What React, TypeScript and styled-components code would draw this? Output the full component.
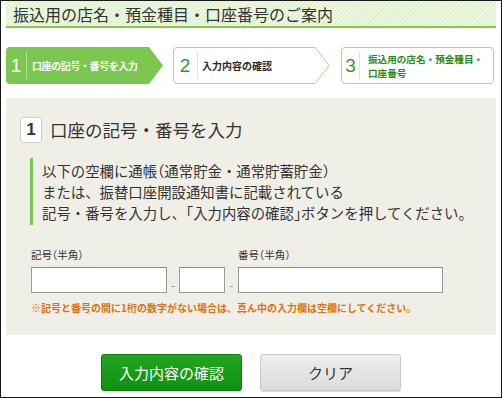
import React from "react";
import styled, { createGlobalStyle } from "styled-components";

const GlobalStyle = createGlobalStyle`
  html, body {
    margin: 0;
    padding: 0;
    background: #fff;
  }
  body {
    font-family: "Noto Sans CJK JP", "Noto Sans", sans-serif;
    color: #333;
  }
  * {
    box-sizing: border-box;
  }
`;

type StepKind = "active" | "next" | "last";

interface StepProps {
  kind: StepKind;
  num: number;
  width: number;
  numWidth: number;
  gap: number;
  children: React.ReactNode;
}

const ArrowShape: React.FC<{ kind: StepKind; width: number }> = ({
  kind,
  width,
}) => {
  const h = 37;
  const w = width;
  if (kind === "active") {
    return (
      <ShapeSvg width={w} height={h} viewBox={`0 0 ${w} ${h}`}>
        <path
          d={`M4 0 H${w - 14} L${w} ${h / 2} L${w - 14} ${h} H4 Q0 ${h} 0 ${h - 4} V4 Q0 0 4 0 Z`}
          fill="#7bc750"
        />
      </ShapeSvg>
    );
  }
  if (kind === "next") {
    return (
      <ShapeSvg width={w} height={h} viewBox={`0 0 ${w} ${h}`}>
        <path
          d={`M4 0.5 H${w - 15} L${w - 0.8} ${h / 2} L${w - 15} ${h - 0.5} H4 Q0.5 ${h - 0.5} 0.5 ${h - 4} V4 Q0.5 0.5 4 0.5 Z`}
          fill="#fff"
          stroke="#a9d98c"
          strokeWidth="1"
        />
      </ShapeSvg>
    );
  }
  return null;
};

const Step: React.FC<StepProps> = ({
  kind,
  num,
  width,
  numWidth,
  gap,
  children,
}) => (
  <StepBox kind={kind} style={{ width }}>
    <ArrowShape kind={kind} width={width} />
    <StepNum kind={kind} style={{ width: numWidth }}>
      {num}
    </StepNum>
    <StepSep kind={kind} />
    <StepLabel kind={kind} style={{ marginLeft: gap }}>
      {children}
    </StepLabel>
  </StepBox>
);

const App: React.FC = () => {
  return (
    <>
      <GlobalStyle />
      <Frame>
        <Header>
          <h1>振込用の店名・預金種目・口座番号のご案内</h1>
        </Header>

        <Steps>
          <Step kind="active" num={1} width={157} numWidth={20} gap={5}>
            口座の記号・番号を入力
          </Step>
          <Step kind="next" num={2} width={157} numWidth={24} gap={4}>
            入力内容の確認
          </Step>
          <Step kind="last" num={3} width={153} numWidth={17} gap={8}>
            <StepLine>振込用の店名・預金種目・</StepLine>
            <StepLine>口座番号</StepLine>
          </Step>
        </Steps>

        <Panel>
          <Heading>
            <HeadingNum>1</HeadingNum>
            <h2>口座の記号・番号を入力</h2>
          </Heading>

          <Description>
            以下の空欄に通帳<Half>（</Half>通常貯金・通常貯蓄貯金<Half>）</Half>
            <br />
            または、振替口座開設通知書に記載されている
            <br />
            記号・番号を入力し、<Half>「</Half>入力内容の確認<Half>」</Half>
            ボタンを押してください。
          </Description>

          <FieldGrid>
            <FieldLabel col={1}>
              記号<Half>（</Half>半角<Half>）</Half>
            </FieldLabel>
            <FieldLabel col={5}>
              番号<Half>（</Half>半角<Half>）</Half>
            </FieldLabel>
            <TextInput col={1} aria-label="記号1" />
            <Dash col={2}>-</Dash>
            <TextInput col={3} aria-label="記号2" />
            <Dash col={4}>-</Dash>
            <TextInput col={5} aria-label="番号" />
          </FieldGrid>

          <Warning>
            ※記号と番号の間に1桁の数字がない場合は、真ん中の入力欄は空欄にしてください。
          </Warning>
        </Panel>

        <Buttons>
          <Button variant="primary">入力内容の確認</Button>
          <Button variant="secondary">クリア</Button>
        </Buttons>
      </Frame>
    </>
  );
};

export default App;

const Frame = styled.div`
  width: 502px;
  height: 398px;
  border: 1px solid #1a1a1a;
  padding: 0 5px;
  overflow: hidden;
`;

const Header = styled.div`
  height: 27px;
  border-bottom: 2px solid #86c94f;
  background-color: #e3f2cf;
  background-image: repeating-linear-gradient(
    135deg,
    #eef8e2 0px,
    #eef8e2 1.5px,
    #e1f0cc 1.5px,
    #e1f0cc 3px
  );
  padding-left: 7px;
  display: flex;
  align-items: center;

  h1 {
    margin: 0;
    font-size: 16px;
    font-weight: 400;
    line-height: 20px;
    color: #333;
  }
`;

const Half = styled.span`
  font-feature-settings: "halt";
`;

const Steps = styled.div`
  display: flex;
  margin-top: 19px;
  gap: 10px;

  & > :last-child {
    margin-left: 1px;
  }
`;

const StepBox = styled.div<{ kind: StepKind }>`
  position: relative;
  height: 37px;
  display: flex;
  align-items: center;
  border: ${(p) => (p.kind === "last" ? "1px solid #a9d98c" : "none")};
  border-radius: ${(p) => (p.kind === "last" ? "4px" : "0")};
  background: ${(p) => (p.kind === "last" ? "#fff" : "transparent")};
`;

const ShapeSvg = styled.svg`
  position: absolute;
  left: 0;
  top: 0;
  z-index: 0;
`;

const StepNum = styled.span<{ kind: StepKind }>`
  position: relative;
  font-family: "Liberation Sans", Arial, sans-serif;
  font-size: 19px;
  line-height: 22px;
  text-align: center;
  color: ${(p) => (p.kind === "active" ? "#fff" : "#2f9a2a")};
  flex: none;
`;

const StepSep = styled.span<{ kind: StepKind }>`
  position: relative;
  width: 1px;
  height: 27px;
  flex: none;
  background: ${(p) =>
    p.kind === "active" ? "rgba(255, 255, 255, 0.45)" : "#d9e8cf"};
`;

const StepLabel = styled.span<{ kind: StepKind }>`
  position: relative;
  display: flex;
  flex-direction: column;
  font-size: ${(p) => (p.kind === "last" ? "9.6px" : "10px")};
  font-weight: 700;
  line-height: 14px;
  white-space: nowrap;
  letter-spacing: ${(p) => (p.kind === "active" ? "-0.4px" : "0")};
  color: ${(p) =>
    p.kind === "active" ? "#fff" : p.kind === "next" ? "#2a2a2a" : "#2a8a20"};
`;

const StepLine = styled.span`
  display: block;
  height: 14px;
`;

const Panel = styled.div`
  margin-top: 14px;
  background: #efefe8;
  padding: 19px 14px 20px;
`;

const Heading = styled.div`
  display: flex;
  align-items: center;
  gap: 8px;

  h2 {
    margin: 0;
    font-size: 17.5px;
    font-weight: 400;
    line-height: 24px;
    color: #333;
  }
`;

const HeadingNum = styled.span`
  width: 22px;
  height: 26px;
  background: #fff;
  border: 1px solid #d0d0c8;
  border-radius: 3px;
  display: flex;
  align-items: center;
  justify-content: center;
  font-family: "Liberation Sans", Arial, sans-serif;
  font-weight: 700;
  font-size: 17px;
  color: #333;
`;

const Description = styled.p`
  margin: 15px 0 0 10px;
  border-left: 3px solid #7bc750;
  padding: 2px 0 2px 9px;
  font-size: 14.4px;
  line-height: 21px;
  color: #333;
  white-space: nowrap;
`;

const FieldGrid = styled.div`
  display: grid;
  grid-template-columns: 136px 12px 46px 13px 205px;
  grid-template-rows: 14px 26px;
  row-gap: 5px;
  margin: 23px 0 0 11px;
`;

const FieldLabel = styled.label<{ col: number }>`
  grid-row: 1;
  grid-column: ${(p) => p.col};
  font-size: 10.5px;
  line-height: 14px;
  color: #333;
  white-space: nowrap;
`;

const TextInput = styled.input<{ col: number }>`
  grid-row: 2;
  grid-column: ${(p) => p.col};
  width: 100%;
  height: 26px;
  margin: 0;
  border: 1px solid #9a9a9a;
  border-top-color: #8a8a8a;
  background: #fff;
  padding: 0 4px;
  font-size: 13px;
`;

const Dash = styled.span<{ col: number }>`
  grid-row: 2;
  grid-column: ${(p) => p.col};
  align-self: end;
  text-align: center;
  font-family: "Liberation Sans", Arial, sans-serif;
  font-size: 11px;
  line-height: 16px;
  color: #888;
`;

const Warning = styled.p`
  margin: 8px 0 0 11px;
  font-size: 10px;
  font-weight: 700;
  line-height: 14px;
  color: #e2700e;
  white-space: nowrap;
`;

const Buttons = styled.div`
  display: flex;
  justify-content: center;
  gap: 18px;
  margin-top: 19px;
`;

const Button = styled.button<{ variant: "primary" | "secondary" }>`
  width: 141px;
  height: 37px;
  border-radius: 3px;
  font-family: "Noto Sans CJK JP", sans-serif;
  font-size: 15px;
  line-height: 20px;
  cursor: pointer;
  border: 1px solid
    ${(p) => (p.variant === "primary" ? "#0d7d0d" : "#c9c9c9")};
  color: ${(p) => (p.variant === "primary" ? "#fff" : "#333")};
  background: ${(p) =>
    p.variant === "primary"
      ? "linear-gradient(#23a523, #0f900f)"
      : "linear-gradient(#eeeeee, #dcdcdc)"};
  box-shadow: 0 1px 1px rgba(0, 0, 0, 0.15);
`;
